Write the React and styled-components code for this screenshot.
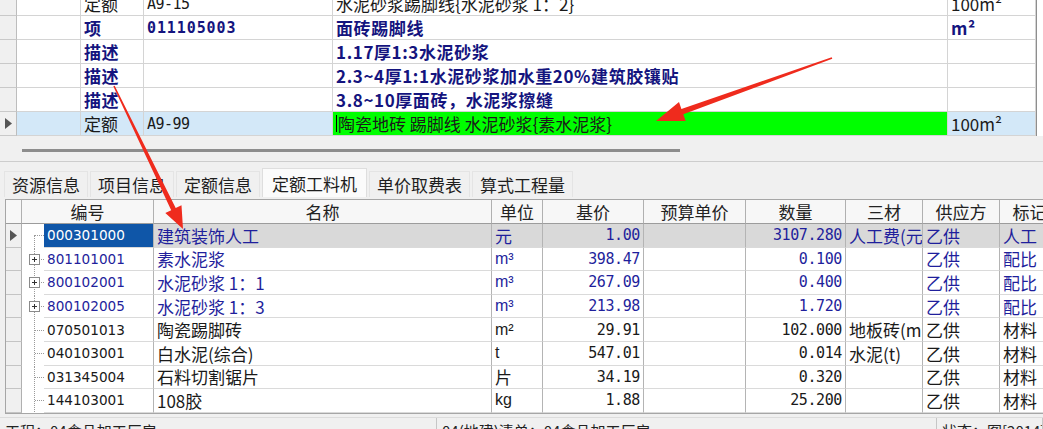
import React from 'react';
import styled, { createGlobalStyle } from 'styled-components';

const GlobalStyle = createGlobalStyle`
  html, body {
    margin: 0;
    padding: 0;
    background: #f0f0f0;
  }
  * {
    box-sizing: border-box;
  }
`;

const Screen = styled.div`
  position: relative;
  width: 1043px;
  height: 429px;
  overflow: hidden;
  display: flex;
  flex-direction: column;
  background: #f0f0f0;
  font-family: "Noto Sans CJK SC", sans-serif;
  font-size: 17px;
  color: #000;
`;

/* ---------- upper grid (清单/定额) ---------- */

const TopPane = styled.div`
  flex-shrink: 0;
  height: 136px;
  overflow: hidden;
  background: #fff;
`;

const TopGrid = styled.div`
  margin-top: -8px;
`;

const TopRow = styled.div`
  display: grid;
  grid-template-columns: 17px 64px 63px 189px 615px 88px 7px;
  height: 24px;
  background: ${p => (p.$selected ? '#d3e8f8' : '#fff')};
`;

const RowHead = styled.div`
  display: flex;
  align-items: center;
  justify-content: center;
  background: #f0f0f0;
  border-right: 1px solid #bdbdbd;
  border-bottom: 1px solid #c9c9c9;
`;

const TopCell = styled.div`
  display: flex;
  align-items: center;
  padding: 0 3px;
  white-space: nowrap;
  overflow: hidden;
  border-right: 1px solid #d4d4d4;
  border-bottom: 1px solid #d4d4d4;
  color: ${p => (p.$item ? '#14147e' : '#1a1a1a')};
  font-weight: ${p => (p.$item ? 700 : 400)};
  letter-spacing: ${p => (p.$item ? '0.6px' : '0')};
  background: ${p => p.$fill || 'transparent'};
`;

const CodeText = styled.span`
  font-family: "DejaVu Sans Mono", "Liberation Mono", monospace;
  font-size: 15px;
  letter-spacing: ${p => (p.$bold ? '0.9px' : '-0.5px')};
`;

const Caret = styled.span`
  display: inline-block;
  width: 1px;
  height: 17px;
  margin-right: 1px;
  background: #000;
`;

const EdgeCell = styled.div`
  background: #fff;
  border-left: 1px solid #8e8e8e;
`;

const HScroll = styled.div`
  flex-shrink: 0;
  height: 26px;
  padding: 13px 0 0 22px;
  border-bottom: 1px solid #cdcdcd;
  background: #f0f0f0;
`;

const Thumb = styled.div`
  width: 658px;
  height: 3px;
  background: #8d8d8d;
`;

/* ---------- tabs ---------- */

const TabStrip = styled.div`
  flex-shrink: 0;
  height: 37px;
  display: flex;
  align-items: flex-end;
  gap: 2px;
  padding: 0 0 2px 4px;
`;

const Tab = styled.div`
  height: ${p => (p.$active ? '29px' : '26px')};
  padding: 0 ${p => (p.$active ? '9px' : '7px')};
  display: flex;
  align-items: center;
  background: ${p => (p.$active ? '#fbfbfb' : '#f0f0f0')};
  border: 1px solid ${p => (p.$active ? '#dedede' : '#e4e4e4')};
  border-bottom: none;
  color: #1e1e1e;
  white-space: nowrap;
`;

/* ---------- lower grid (定额工料机) ---------- */

const COLS = '16px 22px 110px 338px 51px 101px 102px 100px 77px 77px 60px';

const MatGrid = styled.div`
  flex-shrink: 0;
  margin-left: 5px;
  width: 1100px;
  border-top: 1px solid #a6a6a6;
  border-left: 1px solid #a6a6a6;
  border-bottom: 1px solid #a6a6a6;
  background: #fff;
`;

const HeadRow = styled.div`
  display: grid;
  grid-template-columns: ${COLS};
  height: 24px;
  background: #f7f7f7;
`;

const HeadCell = styled.div`
  grid-column: span ${p => p.$span || 1};
  display: flex;
  align-items: center;
  justify-content: center;
  border-right: 1px solid #b0b0b0;
  border-bottom: 1px solid #9c9c9c;
  color: #222;
  white-space: nowrap;
  overflow: hidden;
`;

const MatRow = styled.div`
  display: grid;
  grid-template-columns: ${COLS};
  height: 23.6px;
  background: ${p => (p.$selected ? '#d9d9d9' : '#fff')};
  color: ${p => (p.$blue ? '#1f1f9c' : '#1a1a1a')};
`;

const MatHead = styled.div`
  display: flex;
  align-items: center;
  justify-content: center;
  background: #f0f0f0;
  border-right: 1px solid #b0b0b0;
  border-bottom: 1px solid #c4c4c4;
`;

const TreeCell = styled.div`
  position: relative;
  background: #fff;
  border-bottom: 1px solid #fff;

  &::before {
    content: '';
    position: absolute;
    left: 12px;
    top: ${p => (p.$first ? '50%' : '0')};
    bottom: 0;
    border-left: 1px dotted #9a9a9a;
  }

  &::after {
    content: '';
    position: absolute;
    left: 13px;
    right: 0;
    top: 50%;
    border-top: 1px dotted #9a9a9a;
  }
`;

const PlusBox = styled.svg`
  position: absolute;
  left: 7px;
  top: calc(50% - 5px);
  z-index: 1;
`;

const MatCell = styled.div`
  display: flex;
  align-items: center;
  justify-content: ${p => (p.$right ? 'flex-end' : 'flex-start')};
  padding: 0 3px;
  white-space: nowrap;
  overflow: hidden;
  text-overflow: clip;
  border-right: 1px solid #b4b4b4;
  border-bottom: 1px solid #dadada;
  background: ${p => p.$fill || 'transparent'};
  color: ${p => p.$ink || 'inherit'};
`;

const UnitText = styled.span`
  font-family: "Liberation Sans", "Noto Sans CJK SC", sans-serif;
  font-size: ${p => (p.$cjk ? '17px' : '16px')};
`;

const Num = styled.span`
  font-family: "DejaVu Sans Mono", "Liberation Mono", monospace;
  font-size: 15px;
  letter-spacing: -0.4px;
`;

const CodeNum = styled.span`
  font-family: "DejaVu Sans", "Liberation Sans", sans-serif;
  font-size: 13.6px;
`;

/* ---------- status bar ---------- */

const StatusBar = styled.div`
  flex-shrink: 0;
  margin-top: 3px;
  height: 20px;
  display: grid;
  grid-template-columns: 437px 500px 1fr;
  border-top: 1px solid #dcdcdc;
  font-size: 15px;
  color: #222;
`;

const StatusPart = styled.div`
  padding: 2px 0 0 5px;
  border-right: 1px solid #c6c6c6;
  white-space: nowrap;
  overflow: hidden;
`;

const Overlay = styled.svg`
  position: absolute;
  left: 0;
  top: 0;
  pointer-events: none;
`;

function Marker() {
  return (
    <svg width="7" height="11" viewBox="0 0 7 11">
      <polygon points="0,0 7,5.5 0,11" fill="#555" />
    </svg>
  );
}

function arrowPoints([x0, y0], [x1, y1], head, headW, w0, w1) {
  const dx = x1 - x0;
  const dy = y1 - y0;
  const len = Math.hypot(dx, dy);
  const ux = dx / len;
  const uy = dy / len;
  const px = -uy;
  const py = ux;
  const bx = x1 - ux * head;
  const by = y1 - uy * head;
  return [
    [x0 + (px * w0) / 2, y0 + (py * w0) / 2],
    [bx + (px * w1) / 2, by + (py * w1) / 2],
    [bx + px * headW, by + py * headW],
    [x1, y1],
    [bx - px * headW, by - py * headW],
    [bx - (px * w1) / 2, by - (py * w1) / 2],
    [x0 - (px * w0) / 2, y0 - (py * w0) / 2],
  ]
    .map(p => p.map(v => v.toFixed(1)).join(','))
    .join(' ');
}

const topRows = [
  { type: '定额', code: 'A9-15', name: '水泥砂浆踢脚线{水泥砂浆 1：2}', unit: '100m²' },
  { type: '项', code: '011105003', name: '面砖踢脚线', unit: 'm²', item: true },
  { type: '描述', code: '', name: '1.17厚1:3水泥砂浆', unit: '', item: true },
  { type: '描述', code: '', name: '2.3~4厚1:1水泥砂浆加水重20%建筑胶镶贴', unit: '', item: true },
  { type: '描述', code: '', name: '3.8~10厚面砖，水泥浆擦缝', unit: '', item: true },
  { type: '定额', code: 'A9-99', name: '陶瓷地砖 踢脚线 水泥砂浆{素水泥浆}', unit: '100m²', selected: true },
];

const tabs = ['资源信息', '项目信息', '定额信息', '定额工料机', '单价取费表', '算式工程量'];

const materials = [
  { code: '000301000', name: '建筑装饰人工', unit: '元', base: '1.00', qty: '3107.280', sancai: '人工费(元)', mark: '人工', blue: true, selected: true },
  { code: '801101001', name: '素水泥浆', unit: 'm³', base: '398.47', qty: '0.100', mark: '配比', blue: true, plus: true },
  { code: '800102001', name: '水泥砂浆 1：1', unit: 'm³', base: '267.09', qty: '0.400', mark: '配比', blue: true, plus: true },
  { code: '800102005', name: '水泥砂浆 1：3', unit: 'm³', base: '213.98', qty: '1.720', mark: '配比', blue: true, plus: true },
  { code: '070501013', name: '陶瓷踢脚砖', unit: 'm²', base: '29.91', qty: '102.000', sancai: '地板砖(m²)', mark: '材料' },
  { code: '040103001', name: '白水泥(综合)', unit: 't', base: '547.01', qty: '0.014', sancai: '水泥(t)', mark: '材料' },
  { code: '031345004', name: '石料切割锯片', unit: '片', base: '34.19', qty: '0.320', mark: '材料' },
  { code: '144103001', name: '108胶', unit: 'kg', base: '1.88', qty: '25.200', mark: '材料' },
];

export default function App() {
  return (
    <Screen>
      <GlobalStyle />

      <TopPane>
        <TopGrid>
          {topRows.map((r, i) => (
            <TopRow key={i} $selected={r.selected}>
              <RowHead>{r.selected && <Marker />}</RowHead>
              <TopCell />
              <TopCell $item={r.item}>{r.type}</TopCell>
              <TopCell $item={r.item}>
                <CodeText $bold={r.item}>{r.code}</CodeText>
              </TopCell>
              <TopCell $item={r.item} $fill={r.selected ? '#00ff00' : undefined}>
                {r.selected && <Caret />}
                {r.name}
              </TopCell>
              <TopCell $item={r.item}>{r.unit}</TopCell>
              <EdgeCell />
            </TopRow>
          ))}
        </TopGrid>
      </TopPane>

      <HScroll>
        <Thumb />
      </HScroll>

      <TabStrip>
        {tabs.map(t => (
          <Tab key={t} $active={t === '定额工料机'}>{t}</Tab>
        ))}
      </TabStrip>

      <MatGrid>
        <HeadRow>
          <HeadCell />
          <HeadCell $span={2}>编号</HeadCell>
          <HeadCell>名称</HeadCell>
          <HeadCell>单位</HeadCell>
          <HeadCell>基价</HeadCell>
          <HeadCell>预算单价</HeadCell>
          <HeadCell>数量</HeadCell>
          <HeadCell>三材</HeadCell>
          <HeadCell>供应方</HeadCell>
          <HeadCell>标记</HeadCell>
        </HeadRow>
        {materials.map((m, i) => (
          <MatRow key={m.code} $selected={m.selected} $blue={m.blue}>
            <MatHead>{m.selected && <Marker />}</MatHead>
            <TreeCell $first={i === 0}>
              {m.plus && (
                <PlusBox width="11" height="11" viewBox="0 0 11 11">
                  <rect x="0.5" y="0.5" width="10" height="10" fill="#fff" stroke="#8a8a8a" />
                  <path d="M3 5.5h5M5.5 3v5" stroke="#333" strokeWidth="1" />
                </PlusBox>
              )}
            </TreeCell>
            <MatCell
              $fill={m.selected ? '#0f56a8' : undefined}
              $ink={m.selected ? '#fff' : undefined}
            >
              <CodeNum>{m.code}</CodeNum>
            </MatCell>
            <MatCell>{m.name}</MatCell>
            <MatCell>
              <UnitText $cjk={m.unit === '元' || m.unit === '片'}>{m.unit}</UnitText>
            </MatCell>
            <MatCell $right>
              <Num>{m.base}</Num>
            </MatCell>
            <MatCell />
            <MatCell $right>
              <Num>{m.qty}</Num>
            </MatCell>
            <MatCell>{m.sancai || ''}</MatCell>
            <MatCell>乙供</MatCell>
            <MatCell>{m.mark}</MatCell>
          </MatRow>
        ))}
      </MatGrid>

      <StatusBar>
        <StatusPart>工程：04食品加工厂房</StatusPart>
        <StatusPart>04(地建)清单：04食品加工厂房</StatusPart>
        <StatusPart>状态：图[2014]</StatusPart>
      </StatusBar>

      <Overlay width="1043" height="429" viewBox="0 0 1043 429">
        <polygon points={arrowPoints([114, 86], [183, 229], 22, 9, 1.5, 5)} fill="#ef2b1d" />
        <polygon points={arrowPoints([832, 58], [656, 121], 28, 10, 1.5, 5.5)} fill="#ef2b1d" />
      </Overlay>
    </Screen>
  );
}
